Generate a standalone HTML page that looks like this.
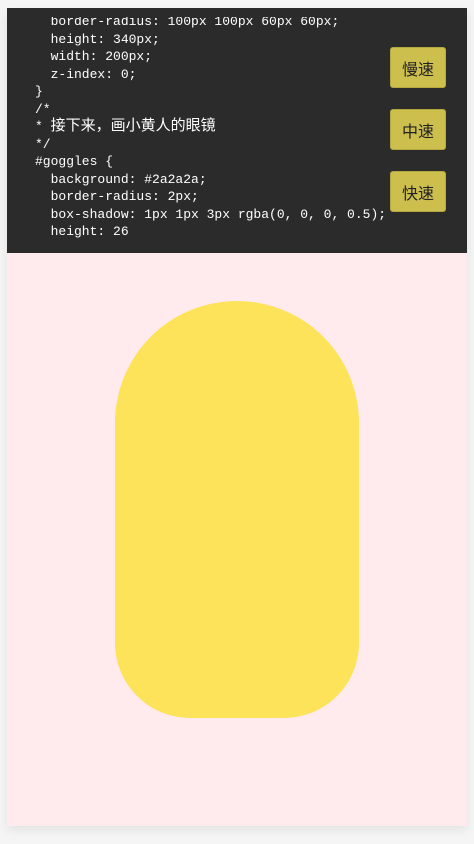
<!DOCTYPE html>
<html><head><meta charset="utf-8"><style>
html,body{margin:0;padding:0;background:#f5f5f5;width:474px;height:844px;overflow:hidden}
.wrap{position:absolute;left:7px;top:8px;width:460px;height:818px;background:#ffeaee;box-shadow:0 4px 10px rgba(0,0,0,0.08)}
.code{position:absolute;left:0;top:0;width:460px;height:245px;background:#2b2b2b;overflow:hidden}
.clip{position:absolute;left:0;top:9px;width:460px;height:236px;overflow:hidden}
pre{margin:0;position:absolute;left:28px;top:-4px;color:#fff;font-family:"Liberation Mono","Noto Sans CJK SC",monospace;font-size:13px;line-height:17.5px}
pre span{font-size:15px;line-height:17.5px}
.btn{position:absolute;left:383px;width:56px;height:41px;background:#cdbf4e;border:1px solid #b5a83f;border-radius:3px;box-sizing:border-box;color:#222;font:16px "Liberation Sans","Noto Sans CJK SC",sans-serif;display:flex;align-items:center;justify-content:center}
.body{position:absolute;left:108px;top:293px;width:244px;height:417px;background:#fde35a;border-radius:122px 122px 75px 75px}
</style></head><body>
<div class="wrap">
<div class="code"><div class="clip"><pre>  border-radius: 100px 100px 60px 60px;
  height: 340px;
  width: 200px;
  z-index: 0;
}
/*
* <span>接下来，画小黄人的眼镜</span>
*/
#goggles {
  background: #2a2a2a;
  border-radius: 2px;
  box-shadow: 1px 1px 3px rgba(0, 0, 0, 0.5);
  height: 26</pre></div>
<div class="btn" style="top:39px">慢速</div>
<div class="btn" style="top:101px">中速</div>
<div class="btn" style="top:163px">快速</div>
</div>
<div class="body"></div>
</div>
</body></html>
